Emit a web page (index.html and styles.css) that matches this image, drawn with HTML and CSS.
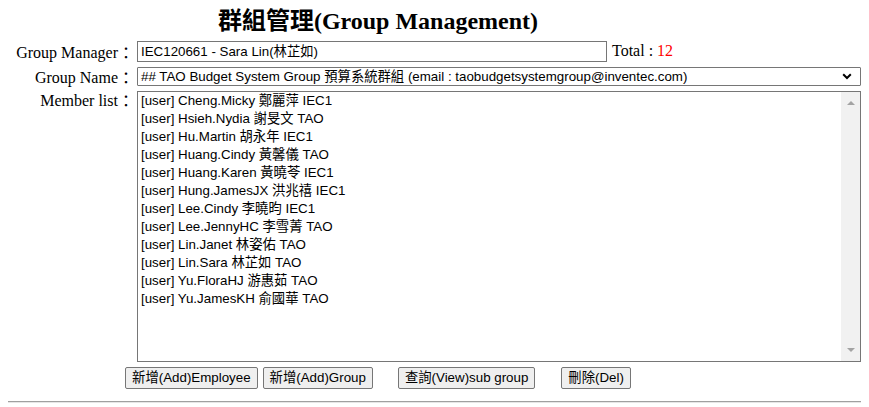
FILE: index.html
```html
<!DOCTYPE html>
<html lang="zh-Hant">
<head>
<meta charset="utf-8">
<title>群組管理(Group Management)</title>
<link rel="stylesheet" href="styles.css">
</head>
<body>
<div class="page">
  <h1 class="title">群組管理(Group Management)</h1>
  <div class="form">
    <div class="label label-manager">Group Manager<span class="colon">：</span></div>
    <div class="field-manager">
      <div class="input">IEC120661 - Sara Lin(林芷如)</div>
      <span class="total">Total : <span class="count">12</span></span>
    </div>

    <div class="label label-name">Group Name<span class="colon">：</span></div>
    <div class="select">
      <span class="select-text">## TAO Budget System Group 預算系統群組 (email : taobudgetsystemgroup@inventec.com)</span>
      <svg class="chevron" width="10" height="7" viewBox="0 0 10 7"><path d="M1.2 1.3 L5 5 L8.8 1.3" fill="none" stroke="#000" stroke-width="2"/></svg>
    </div>

    <div class="label label-members">Member list<span class="colon">：</span></div>
    <div class="textarea">
      <div class="lines">
        <div>[user] Cheng.Micky 鄭麗萍 IEC1</div>
        <div>[user] Hsieh.Nydia 謝旻文 TAO</div>
        <div>[user] Hu.Martin 胡永年 IEC1</div>
        <div>[user] Huang.Cindy 黃馨儀 TAO</div>
        <div>[user] Huang.Karen 黃曉苓 IEC1</div>
        <div>[user] Hung.JamesJX 洪兆禧 IEC1</div>
        <div>[user] Lee.Cindy 李曉昀 IEC1</div>
        <div>[user] Lee.JennyHC 李雪菁 TAO</div>
        <div>[user] Lin.Janet 林姿佑 TAO</div>
        <div>[user] Lin.Sara 林芷如 TAO</div>
        <div>[user] Yu.FloraHJ 游惠茹 TAO</div>
        <div>[user] Yu.JamesKH 俞國華 TAO</div>
      </div>
      <div class="scrollbar">
        <svg width="8" height="4" viewBox="0 0 8 4"><path d="M0 4 L4 0 L8 4 Z" fill="#a3a3a3"/></svg>
        <svg width="8" height="4" viewBox="0 0 8 4"><path d="M0 0 L8 0 L4 4 Z" fill="#a3a3a3"/></svg>
      </div>
    </div>
  </div>
  <div class="actions">
    <button class="btn">新增(Add)Employee</button>
    <button class="btn btn-group">新增(Add)Group</button>
    <button class="btn btn-view">查詢(View)sub group</button>
    <button class="btn btn-del">刪除(Del)</button>
  </div>
  <hr class="rule">
</div>
</body>
</html>
```

FILE: styles.css
```css
html, body {
  background: #fff;
}
body {
  margin: 8px;
  color: #000;
  font-family: "Liberation Serif", "Noto Sans CJK TC", serif;
  font-size: 16px;
}
.title {
  width: 740px;
  margin: 0 0 7px 0;
  font-size: 24px;
  line-height: 26px;
  font-weight: bold;
  text-align: center;
}
.form {
  display: grid;
  grid-template-columns: 126px 724px;
  grid-template-rows: 21px 19px 271px;
  column-gap: 3px;
  row-gap: 5px;
}
.label {
  text-align: right;
  line-height: 20px;
  white-space: nowrap;
}
.colon {
  line-height: 1;
  vertical-align: -1px;
}
.label-manager { padding-top: 2px; }
.label-name { padding-top: 1px; }
.label-members { padding-top: 0; }

.field-manager {
  display: flex;
  align-items: baseline;
}
.input,
.select,
.textarea,
.btn {
  font-family: "Liberation Sans", "Noto Sans CJK TC", sans-serif;
  font-size: 13.33px;
  color: #000;
}
.input {
  box-sizing: border-box;
  width: 470px;
  height: 21px;
  border: 1px solid #767676;
  padding: 0 3px;
  line-height: 19px;
  white-space: nowrap;
}
.total {
  margin-left: 5px;
  font-size: 16px;
  white-space: nowrap;
}
.count {
  color: #ff0000;
}
.select {
  box-sizing: border-box;
  height: 19px;
  border: 1px solid #767676;
  border-radius: 1px;
  padding: 0 8px 0 3px;
  line-height: 17px;
  display: flex;
  align-items: center;
  justify-content: space-between;
  white-space: nowrap;
}
.chevron {
  display: block;
  flex: none;
}
.textarea {
  box-sizing: border-box;
  height: 271px;
  border: 1px solid #767676;
  display: flex;
}
.lines {
  flex: 1;
  padding: 0 3px;
  line-height: 18px;
  white-space: nowrap;
}
.scrollbar {
  width: 19px;
  background: #f1f1f1;
  display: flex;
  flex-direction: column;
  justify-content: space-between;
  align-items: center;
  padding: 9px 0;
  box-sizing: border-box;
}
.scrollbar svg {
  display: block;
}
.actions {
  width: 740px;
  margin-top: 5px;
  display: flex;
  justify-content: center;
}
.btn {
  box-sizing: border-box;
  height: 22px;
  margin: 0;
  padding: 0 6px;
  border: 1px solid #767676;
  border-radius: 2px;
  background: #efefef;
  line-height: 20px;
  white-space: nowrap;
}
.btn-group { margin-left: 5px; }
.btn-view { margin-left: 25px; }
.btn-del { margin-left: 26px; }
.rule {
  margin: 12px 0 0 0;
  height: 0;
  border: 0;
  border-top: 1px solid #a0a0a0;
  border-bottom: 1px solid #e6e6e6;
}
```
